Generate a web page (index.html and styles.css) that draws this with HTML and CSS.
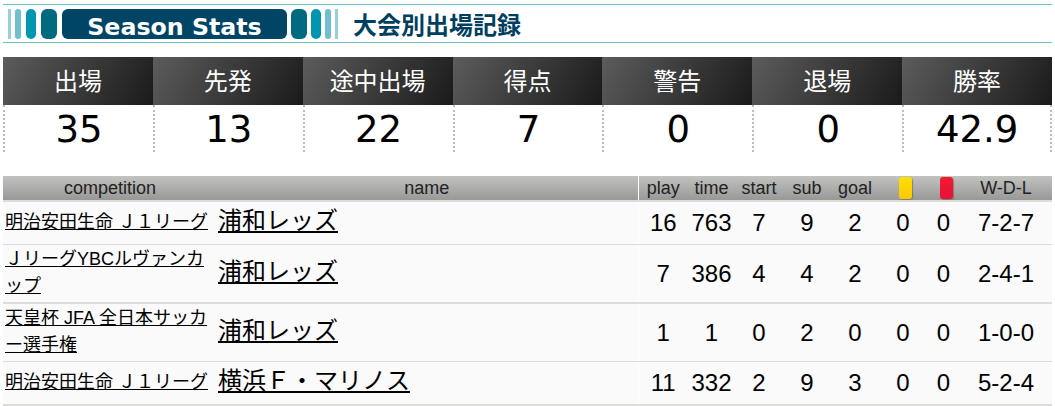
FILE: index.html
```html
<!DOCTYPE html>
<html lang="ja">
<head>
<meta charset="utf-8">
<title>Season Stats</title>
<link rel="stylesheet" href="styles.css">
</head>
<body>
<div class="heading">
  <span class="bar b1"></span><span class="bar b2"></span><span class="bar b3"></span><span class="bar b4"></span>
  <span class="badge">Season Stats</span>
  <span class="bar b4"></span><span class="bar b3"></span><span class="bar b2"></span><span class="bar b1"></span>
  <h2 class="title">大会別出場記録</h2>
</div>
<div class="stats">
  <div class="stat"><div class="stat-label">出場</div><div class="stat-value">35</div></div>
  <div class="stat"><div class="stat-label">先発</div><div class="stat-value">13</div></div>
  <div class="stat"><div class="stat-label">途中出場</div><div class="stat-value">22</div></div>
  <div class="stat"><div class="stat-label">得点</div><div class="stat-value">7</div></div>
  <div class="stat"><div class="stat-label">警告</div><div class="stat-value">0</div></div>
  <div class="stat"><div class="stat-label">退場</div><div class="stat-value">0</div></div>
  <div class="stat last"><div class="stat-label">勝率</div><div class="stat-value">42.9</div></div>
</div>
<table class="records">
  <colgroup>
    <col class="c-comp"><col class="c-name"><col class="c-play"><col class="c-time"><col class="c-start"><col class="c-sub"><col class="c-goal"><col class="c-y"><col class="c-r"><col class="c-wdl">
  </colgroup>
  <thead>
    <tr>
      <th class="head-comp">competition</th><th class="head-name sep">name</th><th>play</th><th>time</th><th>start</th><th>sub</th><th>goal</th>
      <th class="card-cell"><span class="card yellow"></span></th><th class="card-cell"><span class="card red"></span></th><th>W-D-L</th>
    </tr>
  </thead>
  <tbody>
    <tr class="r1">
      <td class="comp"><a href="#">明治安田生命 Ｊ１リーグ</a></td><td class="name sep"><a href="#">浦和レッズ</a></td>
      <td>16</td><td>763</td><td>7</td><td>9</td><td>2</td><td>0</td><td>0</td><td>7-2-7</td>
    </tr>
    <tr class="r2">
      <td class="comp"><a href="#">ＪリーグYBCルヴァンカップ</a></td><td class="name sep"><a href="#">浦和レッズ</a></td>
      <td>7</td><td>386</td><td>4</td><td>4</td><td>2</td><td>0</td><td>0</td><td>2-4-1</td>
    </tr>
    <tr class="r3">
      <td class="comp"><a href="#">天皇杯 JFA 全日本サッカー選手権</a></td><td class="name sep"><a href="#">浦和レッズ</a></td>
      <td>1</td><td>1</td><td>0</td><td>2</td><td>0</td><td>0</td><td>0</td><td>1-0-0</td>
    </tr>
    <tr class="r4">
      <td class="comp"><a href="#">明治安田生命 Ｊ１リーグ</a></td><td class="name sep"><a href="#">横浜Ｆ・マリノス</a></td>
      <td>11</td><td>332</td><td>2</td><td>9</td><td>3</td><td>0</td><td>0</td><td>5-2-4</td>
    </tr>
  </tbody>
</table>
</body>
</html>
```
FILE: styles.css
```css
html, body { margin: 0; padding: 0; background: #fff; }
body {
  padding: 4px 3px 0;
  font-family: "Liberation Sans", "Noto Sans CJK JP", sans-serif;
  color: #000;
  overflow: hidden;
}
.heading {
  display: flex;
  align-items: center;
  height: 37px;
  padding-left: 5px;
  border-top: 1px solid #66c5cc;
  border-bottom: 1px solid #66c5cc;
}
.bar { display: block; height: 30px; flex: none; }
.b1 { width: 3px; background: #94d2d6; margin: 0 4px 0 0; }
.b2 { width: 6px; background: #6fc0cc; margin-right: 5px; border-radius: 3px; }
.b3 { width: 10px; background: #0096b0; margin-right: 5px; border-radius: 5px; }
.b4 { width: 16px; background: #006a80; margin-right: 5px; border-radius: 6px; }
.badge {
  flex: none;
  width: 225px;
  height: 30px;
  margin-right: 4px;
  border-radius: 6px;
  background: #004466;
  color: #fff;
  font: bold 23.7px/37px "DejaVu Sans", sans-serif;
  text-align: center;
}
.badge ~ .b2 { margin-right: 4px; }
.badge ~ .b3 { margin-right: 4px; }
.badge ~ .b4 { margin-right: 4px; }
.badge ~ .b1 { margin-right: 15px; }
.title {
  margin: 0;
  font: bold 24px/30px "Noto Sans CJK JP", sans-serif;
  color: #003f60;
}
.stats {
  display: grid;
  grid-template-columns: repeat(7, 1fr);
  margin-top: 14px;
}
.stat-label {
  height: 48px;
  background: linear-gradient(120deg, #5c5c5c, #1a1a1a);
  color: #fff;
  font: 24px/45px "Noto Sans CJK JP", sans-serif;
  text-align: center;
}
.stat-value {
  height: 47px;
  border-left: 2px dotted #bbb;
  font: 37px/50px "DejaVu Sans", sans-serif;
  text-align: center;
}
.last .stat-value { border-right: 2px dotted #bbb; }
.records {
  width: 1049px;
  margin-top: 24px;
  border-collapse: collapse;
  table-layout: fixed;
  background: #fafafa;
}
.c-comp { width: 210px; }
.c-name { width: 425px; }
.c-play { width: 50px; }
.c-time { width: 47px; }
.c-start { width: 48px; }
.c-sub { width: 48px; }
.c-goal { width: 48px; }
.c-y { width: 48px; }
.c-r { width: 33px; }
.c-wdl { width: 92px; }
th {
  height: 24px;
  padding: 0;
  background: linear-gradient(#c2c2c0, #989896);
  border-bottom: 2px solid #dddcd8;
  font-size: 18px;
  font-weight: normal;
  color: #222;
  text-align: center;
}
.head-comp { padding-left: 4px; box-sizing: border-box; }
.head-name { padding-left: 3px; box-sizing: border-box; }
.card-cell { padding-left: 5px; box-sizing: border-box; }
.sep { border-right: 1px solid #fff; }
td {
  box-sizing: border-box;
  padding: 1px 0 0;
  border-bottom: 1px solid #dddcd8;
  font-size: 24px;
  text-align: center;
}
.r2 td { border-bottom-width: 2px; }
.r4 td { border-bottom-width: 2px; }
.r1 td { height: 43px; }
.r2 td { height: 59px; }
.r3 td { height: 58px; }
.r4 td { height: 44px; }
.comp {
  font-size: 18px;
  line-height: 27px;
  text-align: left;
  line-break: loose;
  padding: 0 2px;
}
.name {
  font-size: 24px;
  line-height: 30px;
  text-align: left;
  padding: 0 0 3px 5px;
}
a { color: #000; }
.card {
  display: block;
  width: 13px;
  height: 22px;
  margin: 0 auto;
  border-radius: 3px;
  box-shadow: 1px 1px 1px rgba(90, 90, 60, .5);
}
.yellow { background: linear-gradient(#ffdf00, #fdc800); }
.red { background: linear-gradient(#f51a2c, #e6103c); }
```
